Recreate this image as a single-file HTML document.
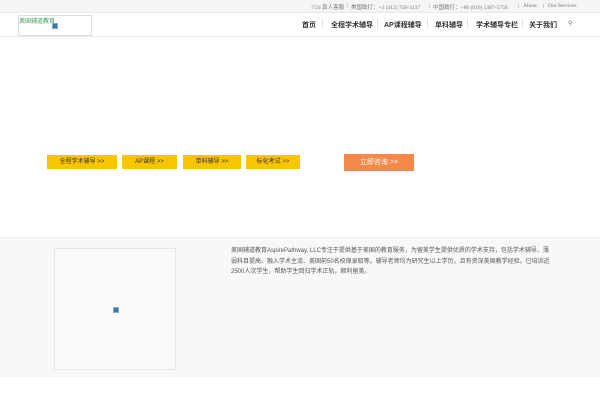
<!DOCTYPE html>
<html><head><meta charset="utf-8"><style>
*{margin:0;padding:0;box-sizing:border-box}
body{width:600px;height:400px;background:#fff;font-family:"Liberation Sans","Noto Sans CJK SC",sans-serif;position:relative;overflow:hidden}
.top{position:absolute;left:0;top:0;width:600px;height:13px;background:#f5f5f5;border-bottom:1px solid #e8e8e8}
.top span{position:absolute;top:3px;font-size:5.5px;color:#777;font-family:"Liberation Serif","Noto Sans CJK SC",serif;white-space:nowrap}
.hdr{position:absolute;left:0;top:13px;width:600px;height:24px;border-bottom:1px solid #eaeaea}
.logo{position:absolute;left:18px;top:15px;width:74px;height:21px;border:1px solid #ddd}
.logo span{position:absolute;left:0;top:0;font-size:6px;color:#3a9a5a}
.ico{position:absolute;width:6px;height:6px;background:#3a78b0;border:1px solid #8ab}
.nav{position:absolute;top:20px;font-size:7px;color:#333;font-weight:bold;white-space:nowrap}
.sep{position:absolute;top:18px;width:1px;height:11px;background:#e5e5e5}
.btn{position:absolute;top:155px;height:14px;background:#f7c600;font-size:6px;color:#333;text-align:center;line-height:14px}
.gray{position:absolute;left:0;top:237px;width:600px;height:140px;background:#f8f8f8;border-top:1px solid #eee}
.imgbox{position:absolute;left:54px;top:248px;width:122px;height:122px;border:1px solid #e6e6e6;background:#fafafa}
.txt{position:absolute;left:231px;top:246px;width:322px;font-size:6px;line-height:10.5px;color:#555}
</style></head><body>
<div class="top">
<span style="left:311px">7/24 真人客服</span>
<span style="left:347px">|</span>
<span style="left:351px">美国致打：+1 (412) 756-3137</span>
<span style="left:429px">|</span>
<span style="left:433px">中国致打：+86 (010) 5387-5758</span>
<span style="left:518px">|</span>
<span style="left:523px">About</span>
<span style="left:543px">|</span>
<span style="left:548px">Our Services</span>
</div>
<div class="hdr"></div>
<div class="logo"><span>美国辅道教育</span><div class="ico" style="left:33px;top:7px"></div></div>
<div class="nav" style="left:302px">首页</div>
<div class="sep" style="left:322px"></div>
<div class="nav" style="left:331px">全程学术辅导</div>
<div class="sep" style="left:377px"></div>
<div class="nav" style="left:384px">AP课程辅导</div>
<div class="sep" style="left:427px"></div>
<div class="nav" style="left:435px">单科辅导</div>
<div class="sep" style="left:467px"></div>
<div class="nav" style="left:476px">学术辅导专栏</div>
<div class="sep" style="left:522px"></div>
<div class="nav" style="left:529px">关于我们</div>
<div class="nav" style="left:568px;font-weight:normal;font-size:6px;color:#666">&#9906;</div>
<div class="btn" style="left:47px;width:70px">全程学术辅导 &gt;&gt;</div>
<div class="btn" style="left:122px;width:55px">AP课程 &gt;&gt;</div>
<div class="btn" style="left:183px;width:58px">单科辅导 &gt;&gt;</div>
<div class="btn" style="left:246px;width:54px">标化考试 &gt;&gt;</div>
<div class="btn" style="left:344px;top:154px;width:70px;height:17px;line-height:17px;background:#f6894a;color:#fff;font-size:7px">立即咨询 &gt;&gt;</div>
<div class="gray"></div>
<div class="imgbox"><div class="ico" style="left:58px;top:58px"></div></div>
<div class="txt">美国辅道教育AspirePathway, LLC专注于提供基于美国的教育服务，为留美学生提供优质的学术支持，包括学术辅导、薄弱科目提高、融入学术主流、美国前50名校保录取等。辅导老师均为研究生以上学历，且有资深美国教学经验。已培训近2500人次学生，帮助学生回归学术正轨，顺利留美。</div>
</body></html>
